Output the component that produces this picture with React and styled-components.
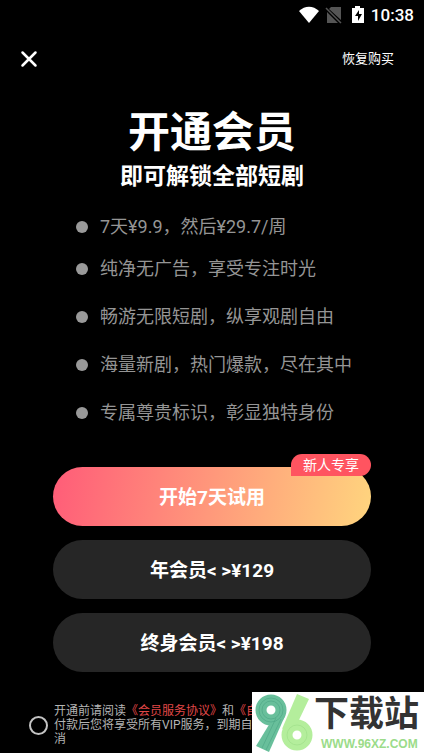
import React, { useState } from 'react';
import styled, { createGlobalStyle } from 'styled-components';

const GlobalStyle = createGlobalStyle`
  * {
    box-sizing: border-box;
  }

  body {
    margin: 0;
    background: #000;
    color: #fff;
    font-family: Roboto, 'Noto Sans CJK SC', sans-serif;
  }

  button {
    border: 0;
    padding: 0;
    background: none;
    color: inherit;
    font: inherit;
    cursor: pointer;
  }
`;

const Page = styled.div`
  position: relative;
  min-height: 100vh;
  overflow: hidden;
  display: flex;
  flex-direction: column;
`;

const StatusBar = styled.div`
  display: flex;
  justify-content: flex-end;
  align-items: center;
  height: 30px;
  padding-right: 10px;
`;

const StatusIcons = styled.svg`
  width: 66px;
  height: 20px;
  margin-right: 7px;
`;

const Time = styled.span`
  font-size: 17px;
  line-height: 20px;
  font-weight: 500;
`;

const Header = styled.header`
  display: flex;
  justify-content: space-between;
  align-items: center;
  height: 58px;
  padding: 0 30px 0 20px;
`;

const CloseButton = styled.button`
  display: flex;
`;

const RestoreButton = styled.button`
  font-size: 13px;
  line-height: 20px;
`;

const Hero = styled.section`
  display: flex;
  flex-direction: column;
  align-items: center;
  padding-top: 18px;
`;

const Title = styled.h1`
  margin: 0;
  font-size: 42px;
  line-height: 54px;
  font-weight: 700;
`;

const Subtitle = styled.h2`
  margin: 0;
  font-size: 23px;
  line-height: 34px;
  font-weight: 700;
`;

const Features = styled.ul`
  display: flex;
  flex-direction: column;
  gap: 20px;
  margin: 0;
  padding: 19px 0 0 76px;
  list-style: none;
`;

const Feature = styled.li`
  display: flex;
  align-items: center;
  gap: 12px;
  color: #959595;
  font-size: 18px;
  line-height: 28px;
  margin-bottom: ${props => (props.$price ? '-6px' : 0)};

  &::before {
    content: '';
    width: 12px;
    height: 12px;
    border-radius: 50%;
    background: #999;
  }
`;

const Plans = styled.section`
  display: flex;
  flex-direction: column;
  gap: 14px;
  padding: 40px 53px 0;
`;

const PlanButton = styled.button`
  position: relative;
  height: 59px;
  padding-top: 2px;
  border-radius: 30px;
  background: ${props =>
    props.$primary ? 'linear-gradient(100deg, #ff5c78, #ffd57e)' : '#262626'};
  font-size: 19px;
  line-height: 28px;
  font-weight: 700;
`;

const Badge = styled.span`
  position: absolute;
  top: -13px;
  right: 0;
  padding: 0 12px;
  border-radius: 11px 11px 11px 0;
  background: #ff5460;
  font-size: 14px;
  line-height: 22px;
  font-weight: 400;
`;

const Agreement = styled.label`
  display: flex;
  align-items: center;
  gap: 6px;
  padding: 32px 70px 7px 29px;
  color: #b4b4b4;
  font-size: 12px;
  line-height: 14px;
`;

const AgreeCheck = styled.input`
  appearance: none;
  flex: none;
  width: 19px;
  height: 19px;
  margin: 0;
  border: 2px solid #c4c4c4;
  border-radius: 50%;

  &:checked {
    background: #ff5460;
  }
`;

const TermsLink = styled.a`
  color: #e04848;
  text-decoration: none;
`;

const SiteMark = styled.aside`
  position: absolute;
  right: 0;
  bottom: 0;
  display: flex;
  width: 172px;
  height: 61px;
  background: #fff;
`;

const SiteLogo = styled.svg`
  flex: none;
  width: 62px;
  height: 61px;
`;

const SiteText = styled.div`
  display: flex;
  flex-direction: column;
  white-space: nowrap;
`;

const SiteName = styled.strong`
  color: #333;
  font-size: 35px;
  line-height: 46px;
  font-weight: 700;
`;

const SiteUrl = styled.span`
  padding-left: 7px;
  color: #9bdc8a;
  font-family: 'Liberation Sans', sans-serif;
  font-size: 12px;
  line-height: 12px;
  font-weight: 700;
`;

const features = [
  { text: '7天¥9.9，然后¥29.7/周', price: true },
  { text: '纯净无广告，享受专注时光' },
  { text: '畅游无限短剧，纵享观剧自由' },
  { text: '海量新剧，热门爆款，尽在其中' },
  { text: '专属尊贵标识，彰显独特身份' },
];

const plans = [
  { label: '开始7天试用', badge: '新人专享', primary: true },
  { label: '年会员< >¥129' },
  { label: '终身会员< >¥198' },
];

const App = () => {
  const [agreed, setAgreed] = useState(false);

  return (
    <Page>
      <GlobalStyle />
      <StatusBar>
        <StatusIcons viewBox="0 0 66 20" aria-hidden="true">
          <path d="M1 6C7 .3 15 .3 21 6L11 18z" fill="#fff" />
          <path d="M33 2h10v13L31 4zM29 7l11 11H29z" fill="#555" />
          <path d="M28 3l15 15" stroke="#555" strokeWidth="1.5" />
          <path d="M57 1h5v2h4v15H54V3h3z" fill="#fff" />
          <path d="M61 5l-4 6h3v5l4-7h-3z" fill="#000" />
        </StatusIcons>
        <Time>10:38</Time>
      </StatusBar>

      <Header>
        <CloseButton aria-label="关闭">
          <svg width="18" height="18" viewBox="0 0 18 18">
            <path
              d="M2.5 2.5l13 13M15.5 2.5l-13 13"
              stroke="#fff"
              strokeWidth="2.5"
              strokeLinecap="round"
            />
          </svg>
        </CloseButton>
        <RestoreButton>恢复购买</RestoreButton>
      </Header>

      <Hero>
        <Title>开通会员</Title>
        <Subtitle>即可解锁全部短剧</Subtitle>
      </Hero>

      <Features>
        {features.map(item => (
          <Feature key={item.text} $price={item.price}>
            {item.text}
          </Feature>
        ))}
      </Features>

      <Plans>
        {plans.map(plan => (
          <PlanButton key={plan.label} $primary={plan.primary}>
            {plan.label}
            {plan.badge && <Badge>{plan.badge}</Badge>}
          </PlanButton>
        ))}
      </Plans>

      <Agreement>
        <AgreeCheck
          type="checkbox"
          checked={agreed}
          onChange={() => setAgreed(!agreed)}
        />
        <span>
          开通前请阅读<TermsLink href="#service">《会员服务协议》</TermsLink>和
          <TermsLink href="#renewal">《自动续费协议》</TermsLink>
          <br />
          付款后您将享受所有VIP服务，到期自动续费，可随时取消
        </span>
      </Agreement>

      <SiteMark>
        <SiteLogo viewBox="0 0 62 61" aria-hidden="true">
          <circle cx="19" cy="18" r="10" fill="none" stroke="#68bf9b" strokeWidth="11" />
          <path d="M33 24L17 60 4 54 18 31z" fill="#68bf9b" />
          <path d="M24 26L10 56M29 27L14 58" stroke="#4fa886" strokeWidth=".7" />
          <circle cx="19" cy="18" r="9" fill="none" stroke="#4fa886" strokeWidth=".7" />
          <circle cx="19" cy="18" r="12" fill="none" stroke="#4fa886" strokeWidth=".7" />
          <circle cx="45" cy="43" r="10" fill="none" stroke="#b4ee9c" strokeWidth="11" />
          <path d="M30 37L45 2 57 7 46 30z" fill="#b4ee9c" />
          <circle cx="45" cy="43" r="10" fill="none" stroke="#9fdf89" strokeWidth=".7" />
        </SiteLogo>
        <SiteText>
          <SiteName>下载站</SiteName>
          <SiteUrl>WWW.96XZ.COM</SiteUrl>
        </SiteText>
      </SiteMark>
    </Page>
  );
};

export default App;
